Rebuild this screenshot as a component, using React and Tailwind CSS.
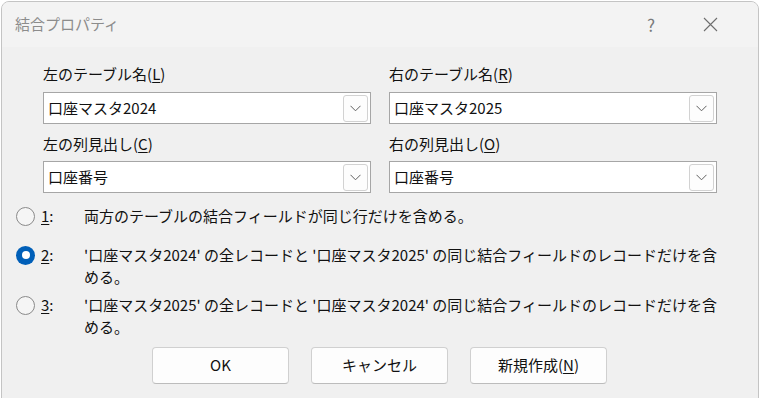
import React from 'react';

const font = { fontFamily: '"Noto Sans CJK JP", "Noto Sans", sans-serif' };

const Chevron = () => (
    <svg width="11" height="7" viewBox="0 0 11 7" fill="none">
        <path d="M0.5 0.8 L5.5 5.8 L10.5 0.8" stroke="#606060" strokeWidth="1" />
    </svg>
);

const Combo = ({ value }) => (
    <div className="h-[32px] bg-white border border-[#a6a6a6] flex items-center pl-[4px] pr-[2px]">
        <span className="flex-1 text-[15px] leading-[22px] text-[#111]">{value}</span>
        <div className="w-[25px] h-[27px] bg-[#fdfdfd] border border-[#d2d2d2] rounded-[3px] flex items-center justify-center">
            <Chevron />
        </div>
    </div>
);

const Field = ({ label, keyChar, value, first }) => (
    <div className={first ? '' : 'mt-[7px]'}>
        <div className="h-[26px] leading-[26px] text-[15px] text-[#111]">
            {label}(<u className="underline-offset-2">{keyChar}</u>)
        </div>
        <div className={first ? 'mt-[5px]' : 'mt-[4px]'}>
            <Combo value={value} />
        </div>
    </div>
);

const Radio = ({ checked }) =>
    checked ? (
        <div className="w-[19px] h-[19px] rounded-full bg-[#005fb8] flex items-center justify-center">
            <div className="w-[8px] h-[8px] rounded-full bg-white" />
        </div>
    ) : (
        <div className="w-[19px] h-[19px] rounded-full border border-[#8a8a8a] bg-[#f5f5f5]" />
    );

const Option = ({ num, checked, lines, className }) => (
    <div className={`flex items-start ${className}`}>
        <div className="w-[82px] flex items-center h-[22px] pl-[14px]">
            <Radio checked={checked} />
            <span className="ml-[6px] text-[15px] leading-[22px] text-[#111]">
                <u className="underline-offset-2">{num}</u>:
            </span>
        </div>
        <div className="text-[15px] leading-[22px] text-[#111]">
            {lines.map((l, i) => (
                <div key={i} className="whitespace-nowrap">{l}</div>
            ))}
        </div>
    </div>
);

const Button = ({ children }) => (
    <button className="w-[137px] h-[37px] bg-[#fdfdfd] border border-[#d0d0d0] border-b-[#bcbcbc] rounded-[4px] text-[15px] text-[#111]">
        {children}
    </button>
);

export default function App() {
    return (
        <div className="w-[760px] h-[398px] bg-white pt-[1px] overflow-hidden" style={font}>
            <div className="ml-[1px] w-[758px] h-[420px] rounded-t-[8px] border border-[#c4c4c4] overflow-hidden bg-[#f0f0f0]">
                {/* title bar */}
                <div className="h-[45px] bg-[#f3f3f3] flex items-center pl-[13px]">
                    <span className="text-[15px] text-[#8c8c8c]">結合プロパティ</span>
                    <span className="ml-auto text-[17px] text-[#7a7a7a] mr-[48px]">?</span>
                    <svg width="15" height="15" viewBox="0 0 15 15" className="mr-[40px]">
                        <path d="M1 1 L14 14 M14 1 L1 14" stroke="#6e6e6e" strokeWidth="1.1" />
                    </svg>
                </div>

                {/* fields */}
                <div className="pt-[14px] pl-[41px] grid grid-cols-[328px_328px] gap-x-[18px]">
                    <div>
                        <Field first label="左のテーブル名" keyChar="L" value="口座マスタ2024" />
                        <Field label="左の列見出し" keyChar="C" value="口座番号" />
                    </div>
                    <div>
                        <Field first label="右のテーブル名" keyChar="R" value="口座マスタ2025" />
                        <Field label="右の列見出し" keyChar="O" value="口座番号" />
                    </div>
                </div>

                {/* join options */}
                <Option
                    className="mt-[12px]"
                    num="1"
                    lines={['両方のテーブルの結合フィールドが同じ行だけを含める。']}
                />
                <Option
                    className="mt-[17px]"
                    num="2"
                    checked
                    lines={[
                        "'口座マスタ2024' の全レコードと '口座マスタ2025' の同じ結合フィールドのレコードだけを含",
                        'める。',
                    ]}
                />
                <Option
                    className="mt-[6px]"
                    num="3"
                    lines={[
                        "'口座マスタ2025' の全レコードと '口座マスタ2024' の同じ結合フィールドのレコードだけを含",
                        'める。',
                    ]}
                />

                {/* buttons */}
                <div className="mt-[9px] flex justify-center gap-[22px] pr-[1px]">
                    <Button>OK</Button>
                    <Button>キャンセル</Button>
                    <Button>
                        新規作成(<u className="underline-offset-2">N</u>)
                    </Button>
                </div>
            </div>
        </div>
    );
}
